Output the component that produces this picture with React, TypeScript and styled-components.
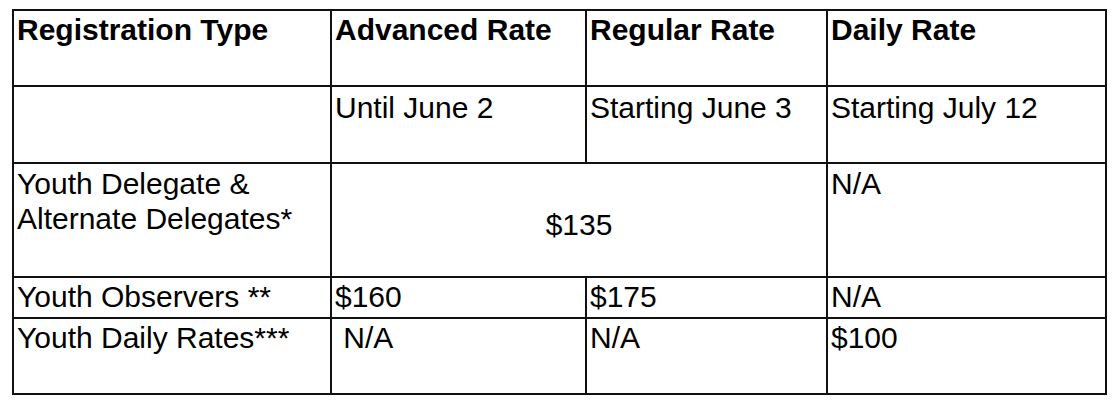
import React from 'react';
import styled, { createGlobalStyle } from 'styled-components';

const GlobalStyle = createGlobalStyle`
  html, body {
    margin: 0;
    padding: 0;
    background: #ffffff;
  }
  body {
    font-family: 'Liberation Sans', Arial, sans-serif;
    color: #000000;
  }
`;

const Page = styled.div`
  padding: 9px 0 0 12px;
`;

const RateTable = styled.table`
  width: 1093px;
  border-collapse: collapse;
  table-layout: fixed;
  border: 2px solid #111;
  font-size: 30px;
  line-height: 1.15;
`;

const Row = styled.tr<{ $height: number }>`
  height: ${p => p.$height}px;
`;

const HeadCell = styled.th`
  border: 2px solid #111;
  padding: 2px 3px;
  text-align: left;
  vertical-align: top;
  font-weight: 700;
`;

const Cell = styled.td<{ $center?: boolean; $top?: number }>`
  border: 2px solid #111;
  padding: ${p => p.$top ?? 2}px 3px 2px;
  text-align: ${p => (p.$center ? 'center' : 'left')};
  vertical-align: ${p => (p.$center ? 'middle' : 'top')};
  font-weight: 400;
  white-space: pre-wrap;
`;

const rows = [
  { type: 'Youth Observers **', advanced: '$160', regular: '$175', daily: 'N/A', height: 41 },
  { type: 'Youth Daily Rates***', advanced: ' N/A', regular: 'N/A', daily: '$100', height: 76 },
];

const App = () => (
  <>
    <GlobalStyle />
    <Page>
      <RateTable>
        <colgroup>
          <col style={{ width: 318 }} />
          <col style={{ width: 255 }} />
          <col style={{ width: 241 }} />
          <col style={{ width: 279 }} />
        </colgroup>
        <thead>
          <Row $height={76}>
            <HeadCell>Registration Type</HeadCell>
            <HeadCell>Advanced Rate</HeadCell>
            <HeadCell>Regular Rate</HeadCell>
            <HeadCell>Daily Rate</HeadCell>
          </Row>
        </thead>
        <tbody>
          <Row $height={77}>
            <Cell />
            <Cell $top={4}>Until June 2</Cell>
            <Cell $top={4}>Starting June 3</Cell>
            <Cell $top={4}>Starting July 12</Cell>
          </Row>
          <Row $height={114}>
            <Cell $top={3}>
              Youth Delegate &amp;
              <br />
              Alternate Delegates*
            </Cell>
            <Cell colSpan={2} $center $top={12}>
              $135
            </Cell>
            <Cell $top={3}>N/A</Cell>
          </Row>
          {rows.map(r => (
            <Row key={r.type} $height={r.height}>
              <Cell>{r.type}</Cell>
              <Cell>{r.advanced}</Cell>
              <Cell>{r.regular}</Cell>
              <Cell>{r.daily}</Cell>
            </Row>
          ))}
        </tbody>
      </RateTable>
    </Page>
  </>
);

export default App;
